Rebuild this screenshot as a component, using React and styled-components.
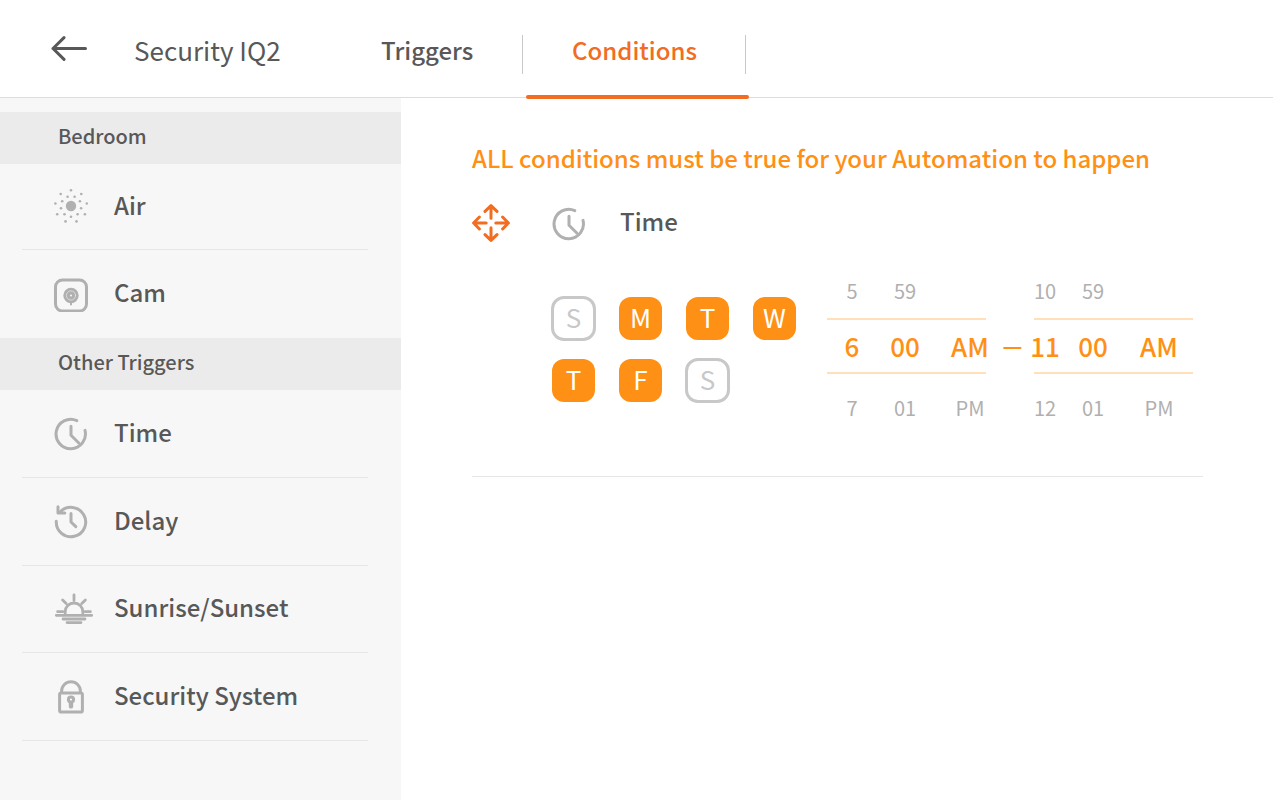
import React from "react";
import styled, { createGlobalStyle } from "styled-components";

const GlobalStyle = createGlobalStyle`
  *, *::before, *::after { box-sizing: border-box; }
  body {
    margin: 0;
    background: #fff;
    color: #585858;
    font-family: "Noto Sans CJK SC", "Noto Sans", sans-serif;
    font-weight: 500;
  }
  button {
    margin: 0;
    padding: 0;
    border: 0;
    background: none;
    color: inherit;
    font: inherit;
    cursor: pointer;
  }
  h1, h2, h3, ul { margin: 0; padding: 0; font-weight: inherit; }
  ul { list-style: none; }
  svg { display: block; }
`;

const Page = styled.div`
  display: flex;
  flex-direction: column;
  min-height: 100vh;
`;

const Header = styled.header`
  display: flex;
  height: 98px;
  border-bottom: 1px solid #dddddd;
`;

const BackButton = styled.button`
  align-self: center;
  margin-left: 51px;
`;

const Title = styled.h1`
  width: 247px;
  margin-left: 47px;
  padding-top: 29px;
  font-size: 26px;
  font-weight: 400;
  line-height: 42px;
`;

const Tabs = styled.nav`
  display: flex;
`;

const Tab = styled.button`
  position: relative;
  width: ${(p) => (p.$active ? 223 : 142)}px;
  height: 98px;
  padding: 29px 0 27px;
  color: ${(p) => (p.$active ? "#f26c21" : "#585858")};
  font-size: 24px;
  line-height: 42px;
  text-align: ${(p) => (p.$active ? "center" : "left")};

  &::before {
    content: "";
    position: absolute;
    top: 35px;
    right: 0;
    width: 1px;
    height: 39px;
    background: #c8c8c8;
  }

  &::after {
    content: "";
    position: absolute;
    display: ${(p) => (p.$active ? "block" : "none")};
    left: 3px;
    right: -3px;
    bottom: -1px;
    height: 4px;
    border-radius: 2px;
    background: #f26c21;
  }
`;

const Body = styled.div`
  display: flex;
  flex: 1;
`;

const Sidebar = styled.aside`
  flex: none;
  width: 401px;
  padding-top: 14px;
  background: #f7f7f7;
`;

const GroupTitle = styled.h2`
  height: 52px;
  padding-left: 58px;
  background: #ebebeb;
  font-size: 20px;
  line-height: 48px;
`;

const ItemList = styled.ul`
  padding: 0 33px 0 22px;
`;

const Item = styled.li`
  height: ${(p) => p.$height}px;
  border-bottom: ${(p) => (p.$divider ? "1px solid #e6e6e6" : "0")};
`;

const ItemButton = styled.button`
  display: flex;
  align-items: center;
  width: 100%;
  height: 100%;
  padding: 0 0 4px 32px;
  text-align: left;
`;

const ItemIcon = styled.span`
  flex: none;
  width: 60px;
  padding-top: 5px;
`;

const ItemLabel = styled.span`
  font-size: 24px;
  line-height: 40px;
`;

const Main = styled.main`
  flex: 1;
  min-width: 0;
  padding: 40px 70px 40px 71px;
`;

const Notice = styled.h2`
  color: #ff9016;
  font-size: 24px;
  line-height: 40px;
`;

const Condition = styled.section`
  border-bottom: 1px solid #e6e6e6;
`;

const ConditionHead = styled.header`
  display: flex;
  align-items: center;
  height: 88px;
  padding-top: 2px;
`;

const MoveButton = styled.button`
  width: 80px;
`;

const ConditionIcon = styled.span`
  width: 68px;
  padding-top: 2px;
`;

const ConditionName = styled.h3`
  padding-bottom: 4px;
  font-size: 24px;
  line-height: 40px;
`;

const ConditionBody = styled.div`
  display: flex;
  align-items: flex-start;
  height: 210px;
  padding: 8px 0 0 79px;
`;

const Days = styled.div`
  display: grid;
  grid-template-columns: repeat(4, 45px);
  grid-auto-rows: 45px;
  gap: 17px 22px;
  padding-top: 22px;
`;

const Day = styled.button`
  margin: ${(p) => (p.$on ? 1 : 0)}px;
  padding-bottom: 4px;
  border: ${(p) => (p.$on ? "0" : "3px solid #c8c8c8")};
  border-radius: ${(p) => (p.$on ? 12 : 13)}px;
  background: ${(p) => (p.$on ? "#ff9016" : "#fff")};
  color: ${(p) => (p.$on ? "#fff" : "#c8c8c8")};
  font-size: 26px;
  font-weight: 400;
  line-height: 35px;
`;

const Range = styled.div`
  display: flex;
  margin-left: 30px;
`;

const Wheel = styled.div`
  width: 159px;
`;

const WheelRow = styled.div`
  display: grid;
  grid-template-columns: ${(p) => p.$columns};
  height: ${(p) => (p.$current ? 56 : p.$last ? 70 : 44)}px;
  padding-bottom: ${(p) => (p.$current ? 0 : p.$last ? 2 : 10)}px;
  border: solid #ffe0b9;
  border-width: ${(p) => (p.$current ? "2px 0" : "0")};
  color: ${(p) => (p.$current ? "#ff9016" : "#b0b0b0")};
  font-size: ${(p) => (p.$current ? 26 : 20)}px;
  font-weight: ${(p) => (p.$current ? 500 : 400)};
  line-height: ${(p) => (p.$current ? 50 : 30)}px;
`;

const WheelValue = styled.button`
  display: grid;
  place-content: center;
  white-space: nowrap;
`;

const Dash = styled.span`
  width: 48px;
  padding-top: 53px;
  padding-left: 5px;
  color: #ff9016;
  font-family: "Liberation Sans", sans-serif;
  font-size: 32px;
  line-height: 36px;
  text-align: center;
`;

const Stroke = ({ w, h, width = 3, color = "#b0b0b0", children }) => (
  <svg
    width={w}
    height={h}
    viewBox={`0 0 ${w} ${h}`}
    fill="none"
    stroke={color}
    strokeWidth={width}
    strokeLinecap="round"
    strokeLinejoin="round"
    aria-hidden="true"
  >
    {children}
  </svg>
);

const BackIcon = () => (
  <Stroke w={36} h={26} color="#585858">
    <path d="M34.5 12.5H2M13 1.6L2 12.5L13 23.4" />
  </Stroke>
);

const AIR_DOTS = [
  [17, 1.3], [6.7, 5], [27.3, 5], [13.6, 7.8], [20.6, 7.8],
  [8.2, 12.3], [25.9, 12.3], [1.4, 14.5], [32.8, 14.5], [7, 19.2],
  [27.1, 19.2], [3.2, 25.3], [10.5, 25.3], [23.6, 25.3], [30.9, 25.3],
  [17, 27.7], [11.5, 32.4], [22.5, 32.4],
];

const AirIcon = () => (
  <svg width="34" height="36" viewBox="0 0 34 36" fill="#b0b0b0" aria-hidden="true">
    <circle cx="17" cy="17" r="5.2" />
    {AIR_DOTS.map(([x, y]) => (
      <circle key={`${x}-${y}`} cx={x} cy={y} r="1.3" />
    ))}
  </svg>
);

const CamIcon = () => (
  <Stroke w={34} h={34}>
    <rect x="1.5" y="2" width="31" height="31" rx="7" />
    <circle cx="17" cy="17.5" r="7.7" fill="#b0b0b0" stroke="none" />
    <circle cx="17" cy="17.5" r="4.6" stroke="#e2e2e2" strokeWidth="0.8" />
    <circle cx="17" cy="17.5" r="1.1" fill="#f0f0f0" stroke="none" />
    <path d="M17 25.3V26.6" strokeWidth="2" />
  </Stroke>
);

const TimeIcon = () => (
  <Stroke w={34} h={34}>
    <path d="M22.8 3.6A14.7 14.7 0 1 0 31 13.4" />
    <path d="M17 9.3V18.3L24.8 26" />
  </Stroke>
);

const DelayIcon = () => (
  <Stroke w={34} h={34}>
    <path d="M2.3 16.2A14.7 14.7 0 1 0 6.3 6.9" />
    <path d="M4 1.8V8H10.8" />
    <path d="M17 8.4V17L21.8 21.6" />
  </Stroke>
);

const SunIcon = () => (
  <Stroke w={40} h={34} width={2.8}>
    <path d="M11.2 20.2V18.8A8.8 8.8 0 0 1 28.8 18.8V20.2" />
    <path d="M20 2V7.6M8.6 7L12.2 10.5M31.4 7L27.8 10.5" />
    <path d="M3.6 18.7H9M31 18.7H36.4M2.3 22.3H37.7M9 26H31M13 29.6H27" />
  </Stroke>
);

const LockIcon = () => (
  <Stroke w={34} h={34}>
    <rect x="5.6" y="13" width="22.8" height="19" rx="1.6" />
    <path d="M7.6 12.5V11.2A9.4 9.4 0 0 1 26.4 11.2V12.5" />
    <circle cx="17" cy="19.6" r="2.6" />
    <path d="M17 23V26.4" strokeWidth="4.4" />
  </Stroke>
);

const MoveIcon = () => (
  <Stroke w={38} h={38} color="#f26c21">
    <path d="M19 14.2V1.8M13 7.4L19 1.6L25 7.4" />
    <path d="M19 23.8V36.2M13 30.6L19 36.4L25 30.6" />
    <path d="M14.2 19H1.8M7.4 13L1.6 19L7.4 25" />
    <path d="M23.8 19H36.2M30.6 13L36.4 19L30.6 25" />
  </Stroke>
);

const GROUPS = [
  {
    title: "Bedroom",
    items: [["Air", AirIcon, 86], ["Cam", CamIcon, 88]],
  },
  {
    title: "Other Triggers",
    closed: true,
    items: [
      ["Time", TimeIcon, 88],
      ["Delay", DelayIcon, 88],
      ["Sunrise/Sunset", SunIcon, 87],
      ["Security System", LockIcon, 88],
    ],
  },
];

const DAYS = [
  ["Sunday", false], ["Monday", true], ["Tuesday", true], ["Wednesday", true],
  ["Thursday", true], ["Friday", true], ["Saturday", false],
];

const FROM = [["5", "59", ""], ["6", "00", "AM"], ["7", "01", "PM"]];
const TO = [["10", "59", ""], ["11", "00", "AM"], ["12", "01", "PM"]];

const TimeWheel = ({ label, rows, columns }) => (
  <Wheel role="group" aria-label={label}>
    {rows.map((row, r) => (
      <WheelRow key={r} $columns={columns} $current={r === 1} $last={r === 2}>
        {row.map((value, c) =>
          value ? <WheelValue key={c} type="button">{value}</WheelValue> : null
        )}
      </WheelRow>
    ))}
  </Wheel>
);

export default function App() {
  return (
    <Page>
      <GlobalStyle />
      <Header>
        <BackButton type="button" aria-label="Back"><BackIcon /></BackButton>
        <Title>Security IQ2</Title>
        <Tabs>
          <Tab type="button">Triggers</Tab>
          <Tab type="button" $active aria-current="page">Conditions</Tab>
        </Tabs>
      </Header>
      <Body>
        <Sidebar>
          {GROUPS.map(({ title, closed, items }) => (
            <section key={title}>
              <GroupTitle>{title}</GroupTitle>
              <ItemList>
                {items.map(([name, Icon, height], i) => (
                  <Item key={name} $height={height} $divider={closed || i < items.length - 1}>
                    <ItemButton type="button">
                      <ItemIcon><Icon /></ItemIcon>
                      <ItemLabel>{name}</ItemLabel>
                    </ItemButton>
                  </Item>
                ))}
              </ItemList>
            </section>
          ))}
        </Sidebar>
        <Main>
          <Notice>ALL conditions must be true for your Automation to happen</Notice>
          <Condition>
            <ConditionHead>
              <MoveButton type="button" aria-label="Move condition"><MoveIcon /></MoveButton>
              <ConditionIcon><TimeIcon /></ConditionIcon>
              <ConditionName>Time</ConditionName>
            </ConditionHead>
            <ConditionBody>
              <Days role="group" aria-label="Days">
                {DAYS.map(([day, on]) => (
                  <Day key={day} type="button" $on={on} aria-pressed={on} aria-label={day}>
                    {day[0]}
                  </Day>
                ))}
              </Days>
              <Range>
                <TimeWheel label="From" rows={FROM} columns="50px 56px 74px" />
                <Dash>–</Dash>
                <TimeWheel label="To" rows={TO} columns="22px 74px 58px" />
              </Range>
            </ConditionBody>
          </Condition>
        </Main>
      </Body>
    </Page>
  );
}
